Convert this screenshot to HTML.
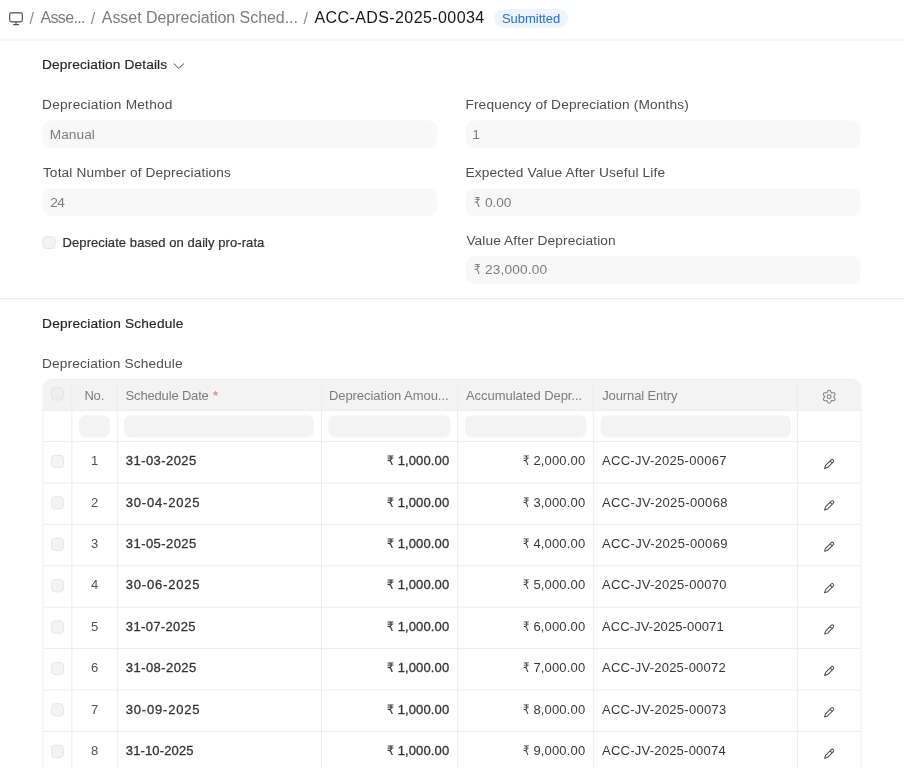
<!DOCTYPE html>
<html><head><meta charset="utf-8"><title>Asset Depreciation Schedule</title>
<style>
*{box-sizing:border-box;margin:0;padding:0}
html,body{width:904px;height:768px;overflow:hidden;background:#fff}
body{font-family:"Liberation Sans","DejaVu Sans",sans-serif;position:relative}
#root{position:absolute;left:0;top:0;width:904px;height:768px;overflow:hidden;will-change:transform}
.a,.t{position:absolute;white-space:nowrap}
.t{line-height:20px}
svg{position:absolute;overflow:visible}
</style></head><body>
<div id="root">
<svg style="left:0;top:0" width="904" height="768"><rect x="0" y="39.3" width="904" height="1.3" fill="#f0f0f0"/><rect x="0" y="298" width="904" height="1.3" fill="#ededed"/><rect x="494.1" y="8.9" width="74.2" height="18.9" rx="9.45" fill="#ecf4fc"/><rect x="42.6" y="120.4" width="394.7" height="27.5" rx="8" fill="#f8f8f8"/><rect x="465.9" y="120.4" width="394.7" height="27.5" rx="8" fill="#f8f8f8"/><rect x="42.6" y="188.4" width="394.7" height="27.5" rx="8" fill="#f8f8f8"/><rect x="465.9" y="188.4" width="394.7" height="27.5" rx="8" fill="#f8f8f8"/><rect x="465.9" y="256.3" width="394.7" height="27.5" rx="8" fill="#f8f8f8"/><rect x="42.9" y="236.5" width="12.3" height="12.1" rx="3.6" fill="#f3f3f3" stroke="#e6e6e6"/><path d="M43.1 800V388A8.5 8.5 0 0 1 51.6 379.5H852.4A8.5 8.5 0 0 1 860.9 388V800" fill="#fff" stroke="#ededed"/><path d="M43.6 410V388A8 8 0 0 1 51.6 380H852.4A8 8 0 0 1 860.4 388V410Z" fill="#f3f3f3"/><rect x="71.4" y="380" width="1" height="400" fill="#ededed"/><rect x="116.8" y="380" width="1" height="400" fill="#ededed"/><rect x="321" y="380" width="1" height="400" fill="#ededed"/><rect x="457.1" y="380" width="1" height="400" fill="#ededed"/><rect x="592.8" y="380" width="1" height="400" fill="#ededed"/><rect x="796.9" y="380" width="1" height="400" fill="#ededed"/><rect x="43.6" y="409.9" width="816.8" height="1" fill="#ededed"/><rect x="43.6" y="441.1" width="816.8" height="1" fill="#ededed"/><rect x="43.6" y="482.5" width="816.8" height="1" fill="#ededed"/><rect x="43.6" y="523.9" width="816.8" height="1" fill="#ededed"/><rect x="43.6" y="565.3" width="816.8" height="1" fill="#ededed"/><rect x="43.6" y="606.7" width="816.8" height="1" fill="#ededed"/><rect x="43.6" y="648.1" width="816.8" height="1" fill="#ededed"/><rect x="43.6" y="689.5" width="816.8" height="1" fill="#ededed"/><rect x="43.6" y="730.9" width="816.8" height="1" fill="#ededed"/><rect x="51.4" y="387.8" width="12.1" height="12.2" rx="3.6" fill="#eeeeee" stroke="#e4e4e4"/><rect x="79.1" y="415.2" width="30.8" height="22.3" rx="7" fill="#f3f3f3"/><rect x="124" y="415.2" width="190.1" height="22.3" rx="7" fill="#f3f3f3"/><rect x="328.3" y="415.2" width="122.1" height="22.3" rx="7" fill="#f3f3f3"/><rect x="465" y="415.2" width="121.5" height="22.3" rx="7" fill="#f3f3f3"/><rect x="600.6" y="415.2" width="190.2" height="22.3" rx="7" fill="#f3f3f3"/><rect x="51.6" y="455.3" width="11.9" height="12.4" rx="3.6" fill="#f3f3f3" stroke="#e6e6e6"/><rect x="51.6" y="496.7" width="11.9" height="12.4" rx="3.6" fill="#f3f3f3" stroke="#e6e6e6"/><rect x="51.6" y="538.1" width="11.9" height="12.4" rx="3.6" fill="#f3f3f3" stroke="#e6e6e6"/><rect x="51.6" y="579.5" width="11.9" height="12.4" rx="3.6" fill="#f3f3f3" stroke="#e6e6e6"/><rect x="51.6" y="620.9" width="11.9" height="12.4" rx="3.6" fill="#f3f3f3" stroke="#e6e6e6"/><rect x="51.6" y="662.3" width="11.9" height="12.4" rx="3.6" fill="#f3f3f3" stroke="#e6e6e6"/><rect x="51.6" y="703.7" width="11.9" height="12.4" rx="3.6" fill="#f3f3f3" stroke="#e6e6e6"/><rect x="51.6" y="745.1" width="11.9" height="12.4" rx="3.6" fill="#f3f3f3" stroke="#e6e6e6"/></svg>
<svg style="left:0;top:0" width="40" height="40" fill="none" stroke="#4f4f4f" stroke-width="1.15" stroke-linecap="round" stroke-linejoin="round"><rect x="9.7" y="12.85" width="12.6" height="8.95" rx="1.45"/><path d="M16 21.8v2.6M13.6 24.55h4.9"/></svg>
<svg style="left:0;top:0" width="200" height="80" fill="none" stroke="#404040" stroke-width="1" stroke-linecap="round" stroke-linejoin="round"><path d="M174.1 63.9L178.85 68.4L183.6 63.9"/></svg>
<svg style="left:0;top:0" width="904" height="768" fill="none" stroke="#858585" stroke-width="1.05" stroke-linejoin="round"><path d="M829.20 390.20 L829.62 390.27 L830.02 390.46 L830.38 390.77 L830.68 391.17 L830.92 391.63 L831.10 392.11 L831.24 392.57 L831.38 392.93 L831.76 392.87 L832.22 392.76 L832.73 392.68 L833.24 392.66 L833.74 392.72 L834.19 392.87 L834.56 393.12 L834.83 393.45 L834.98 393.85 L835.01 394.29 L834.92 394.76 L834.73 395.22 L834.45 395.66 L834.12 396.05 L833.80 396.40 L833.55 396.70 L833.80 397.00 L834.12 397.35 L834.45 397.74 L834.73 398.18 L834.92 398.64 L835.01 399.11 L834.98 399.55 L834.83 399.95 L834.56 400.28 L834.19 400.53 L833.74 400.68 L833.24 400.74 L832.73 400.72 L832.22 400.64 L831.76 400.53 L831.38 400.47 L831.24 400.83 L831.10 401.29 L830.92 401.77 L830.68 402.23 L830.38 402.63 L830.02 402.94 L829.62 403.13 L829.20 403.20 L828.78 403.13 L828.38 402.94 L828.02 402.63 L827.72 402.23 L827.48 401.77 L827.30 401.29 L827.16 400.83 L827.03 400.47 L826.64 400.53 L826.18 400.64 L825.67 400.72 L825.16 400.74 L824.66 400.68 L824.21 400.53 L823.84 400.28 L823.57 399.95 L823.42 399.55 L823.39 399.11 L823.48 398.64 L823.67 398.18 L823.95 397.74 L824.28 397.35 L824.60 397.00 L824.85 396.70 L824.60 396.40 L824.28 396.05 L823.95 395.66 L823.67 395.22 L823.48 394.76 L823.39 394.29 L823.42 393.85 L823.57 393.45 L823.84 393.12 L824.21 392.87 L824.66 392.72 L825.16 392.66 L825.67 392.68 L826.18 392.76 L826.64 392.87 L827.03 392.93 L827.16 392.57 L827.30 392.11 L827.48 391.63 L827.72 391.17 L828.02 390.77 L828.38 390.46 L828.78 390.27Z"/><circle cx="829.2" cy="396.7" r="1.95"/></svg>
<svg style="left:0;top:0" width="904" height="768" fill="none" stroke="#4a4a4a" stroke-width="1" stroke-linejoin="round" stroke-linecap="round"><g transform="translate(824.55 468.55) rotate(-45)"><path d="M0 0L2.9 -1.45H10.9A1.45 1.45 0 0 1 10.9 1.45H2.9ZM9.3 -1.45V1.45"/></g><g transform="translate(824.55 509.95) rotate(-45)"><path d="M0 0L2.9 -1.45H10.9A1.45 1.45 0 0 1 10.9 1.45H2.9ZM9.3 -1.45V1.45"/></g><g transform="translate(824.55 551.35) rotate(-45)"><path d="M0 0L2.9 -1.45H10.9A1.45 1.45 0 0 1 10.9 1.45H2.9ZM9.3 -1.45V1.45"/></g><g transform="translate(824.55 592.75) rotate(-45)"><path d="M0 0L2.9 -1.45H10.9A1.45 1.45 0 0 1 10.9 1.45H2.9ZM9.3 -1.45V1.45"/></g><g transform="translate(824.55 634.15) rotate(-45)"><path d="M0 0L2.9 -1.45H10.9A1.45 1.45 0 0 1 10.9 1.45H2.9ZM9.3 -1.45V1.45"/></g><g transform="translate(824.55 675.55) rotate(-45)"><path d="M0 0L2.9 -1.45H10.9A1.45 1.45 0 0 1 10.9 1.45H2.9ZM9.3 -1.45V1.45"/></g><g transform="translate(824.55 716.95) rotate(-45)"><path d="M0 0L2.9 -1.45H10.9A1.45 1.45 0 0 1 10.9 1.45H2.9ZM9.3 -1.45V1.45"/></g><g transform="translate(824.55 758.35) rotate(-45)"><path d="M0 0L2.9 -1.45H10.9A1.45 1.45 0 0 1 10.9 1.45H2.9ZM9.3 -1.45V1.45"/></g></svg>
<div class="t" style="left:29.60px;top:9px;font-size:16px;color:#8f8f8f;letter-spacing:0.000px">/</div>
<div class="t" style="left:40.40px;top:8px;font-size:16px;color:#7c7c7c;letter-spacing:-0.627px">Asse...</div>
<div class="t" style="left:90.80px;top:9px;font-size:16px;color:#8f8f8f;letter-spacing:0.000px">/</div>
<div class="t" style="left:101.80px;top:8px;font-size:16px;color:#7c7c7c;letter-spacing:-0.050px">Asset Depreciation Sched...</div>
<div class="t" style="left:303.60px;top:9px;font-size:16px;color:#8f8f8f;letter-spacing:0.000px">/</div>
<div class="t" style="left:314.40px;top:8px;font-size:16px;color:#171717;letter-spacing:0.415px">ACC-ADS-2025-00034</div>
<div class="t" style="left:501.90px;top:9px;font-size:13px;color:#2a6fc9;letter-spacing:-0.013px">Submitted</div>
<div class="t" style="left:42.10px;top:55px;font-size:13.7px;color:#262626;letter-spacing:0.135px;-webkit-text-stroke:0.18px #262626">Depreciation Details</div>
<div class="t" style="left:42.10px;top:314px;font-size:13.7px;color:#262626;letter-spacing:0.174px;-webkit-text-stroke:0.18px #262626">Depreciation Schedule</div>
<div class="t" style="left:42.10px;top:95px;font-size:13.7px;color:#4d4d4d;letter-spacing:0.223px">Depreciation Method</div>
<div class="t" style="left:465.40px;top:95px;font-size:13.7px;color:#4d4d4d;letter-spacing:0.155px">Frequency of Depreciation (Months)</div>
<div class="t" style="left:42.90px;top:163px;font-size:13.7px;color:#4d4d4d;letter-spacing:0.141px">Total Number of Depreciations</div>
<div class="t" style="left:465.40px;top:163px;font-size:13.7px;color:#4d4d4d;letter-spacing:0.141px">Expected Value After Useful Life</div>
<div class="t" style="left:466.40px;top:231px;font-size:13.7px;color:#4d4d4d;letter-spacing:0.116px">Value After Depreciation</div>
<div class="t" style="left:42.10px;top:354px;font-size:13.7px;color:#4d4d4d;letter-spacing:0.139px">Depreciation Schedule</div>
<div class="t" style="left:49.70px;top:125px;font-size:13.7px;color:#7c7c7c;letter-spacing:0.050px">Manual</div>
<div class="t" style="left:472.30px;top:125px;font-size:13.7px;color:#7c7c7c;letter-spacing:0.000px">1</div>
<div class="t" style="left:50.30px;top:193px;font-size:13.7px;color:#7c7c7c;letter-spacing:-0.712px">24</div>
<div class="t" style="left:473.60px;top:193px;font-size:13.7px;color:#7c7c7c;transform-origin:0 0;transform:scaleX(0.756)">₹</div>
<div class="t" style="left:485.00px;top:193px;font-size:13.7px;color:#7c7c7c;letter-spacing:-0.109px">0.00</div>
<div class="t" style="left:473.60px;top:260px;font-size:13.7px;color:#7c7c7c;transform-origin:0 0;transform:scaleX(0.756)">₹</div>
<div class="t" style="left:485.00px;top:260px;font-size:13.7px;color:#7c7c7c;letter-spacing:0.165px">23,000.00</div>
<div class="t" style="left:62.60px;top:233px;font-size:13px;color:#2e2e2e;letter-spacing:0.069px;-webkit-text-stroke:0.2px #2e2e2e">Depreciate based on daily pro-rata</div>
<div class="t" style="left:84.40px;top:386px;font-size:13px;color:#7c7c7c;letter-spacing:-0.159px">No.</div>
<div class="t" style="left:125.60px;top:386px;font-size:13px;color:#7c7c7c;letter-spacing:-0.171px">Schedule Date</div>
<div class="t" style="left:212.90px;top:386px;font-size:13px;color:#e4888b;letter-spacing:0.000px;-webkit-text-stroke:0.25px #e4888b">*</div>
<div class="t" style="left:328.90px;top:386px;font-size:13px;color:#7c7c7c;letter-spacing:-0.052px">Depreciation Amou...</div>
<div class="t" style="left:466.00px;top:386px;font-size:13px;color:#7c7c7c;letter-spacing:-0.053px">Accumulated Depr...</div>
<div class="t" style="left:602.20px;top:386px;font-size:13px;color:#7c7c7c;letter-spacing:-0.116px">Journal Entry</div>
<div class="t" style="left:91.10px;top:451px;font-size:13px;color:#525252;letter-spacing:0.000px">1</div>
<div class="t" style="left:125.80px;top:451px;font-size:13px;color:#333;letter-spacing:0.437px;-webkit-text-stroke:0.3px #333">31-03-2025</div>
<div class="t" style="left:387.30px;top:451px;font-size:13px;color:#333;transform-origin:0 0;transform:scaleX(0.837);-webkit-text-stroke:0.18px #333">₹</div>
<div class="t" style="left:397.70px;top:451px;font-size:13px;color:#333;letter-spacing:0.118px;-webkit-text-stroke:0.3px #333">1,000.00</div>
<div class="t" style="left:523.10px;top:451px;font-size:13px;color:#383838;transform-origin:0 0;transform:scaleX(0.775)">₹</div>
<div class="t" style="left:533.40px;top:451px;font-size:13px;color:#383838;letter-spacing:0.161px">2,000.00</div>
<div class="t" style="left:602.00px;top:451px;font-size:13px;color:#383838;letter-spacing:0.286px">ACC-JV-2025-00067</div>
<div class="t" style="left:91.10px;top:493px;font-size:13px;color:#525252;letter-spacing:0.000px">2</div>
<div class="t" style="left:125.80px;top:493px;font-size:13px;color:#333;letter-spacing:0.804px;-webkit-text-stroke:0.3px #333">30-04-2025</div>
<div class="t" style="left:387.30px;top:493px;font-size:13px;color:#333;transform-origin:0 0;transform:scaleX(0.837);-webkit-text-stroke:0.18px #333">₹</div>
<div class="t" style="left:397.70px;top:493px;font-size:13px;color:#333;letter-spacing:0.118px;-webkit-text-stroke:0.3px #333">1,000.00</div>
<div class="t" style="left:523.10px;top:493px;font-size:13px;color:#383838;transform-origin:0 0;transform:scaleX(0.775)">₹</div>
<div class="t" style="left:533.40px;top:493px;font-size:13px;color:#383838;letter-spacing:0.161px">3,000.00</div>
<div class="t" style="left:602.00px;top:493px;font-size:13px;color:#383838;letter-spacing:0.342px">ACC-JV-2025-00068</div>
<div class="t" style="left:91.10px;top:534px;font-size:13px;color:#525252;letter-spacing:0.000px">3</div>
<div class="t" style="left:125.80px;top:534px;font-size:13px;color:#333;letter-spacing:0.437px;-webkit-text-stroke:0.3px #333">31-05-2025</div>
<div class="t" style="left:387.30px;top:534px;font-size:13px;color:#333;transform-origin:0 0;transform:scaleX(0.837);-webkit-text-stroke:0.18px #333">₹</div>
<div class="t" style="left:397.70px;top:534px;font-size:13px;color:#333;letter-spacing:0.118px;-webkit-text-stroke:0.3px #333">1,000.00</div>
<div class="t" style="left:523.10px;top:534px;font-size:13px;color:#383838;transform-origin:0 0;transform:scaleX(0.775)">₹</div>
<div class="t" style="left:533.40px;top:534px;font-size:13px;color:#383838;letter-spacing:0.161px">4,000.00</div>
<div class="t" style="left:602.00px;top:534px;font-size:13px;color:#383838;letter-spacing:0.342px">ACC-JV-2025-00069</div>
<div class="t" style="left:91.10px;top:575px;font-size:13px;color:#525252;letter-spacing:0.000px">4</div>
<div class="t" style="left:125.80px;top:575px;font-size:13px;color:#333;letter-spacing:0.804px;-webkit-text-stroke:0.3px #333">30-06-2025</div>
<div class="t" style="left:387.30px;top:575px;font-size:13px;color:#333;transform-origin:0 0;transform:scaleX(0.837);-webkit-text-stroke:0.18px #333">₹</div>
<div class="t" style="left:397.70px;top:575px;font-size:13px;color:#333;letter-spacing:0.118px;-webkit-text-stroke:0.3px #333">1,000.00</div>
<div class="t" style="left:523.10px;top:575px;font-size:13px;color:#383838;transform-origin:0 0;transform:scaleX(0.775)">₹</div>
<div class="t" style="left:533.40px;top:575px;font-size:13px;color:#383838;letter-spacing:0.161px">5,000.00</div>
<div class="t" style="left:602.00px;top:575px;font-size:13px;color:#383838;letter-spacing:0.286px">ACC-JV-2025-00070</div>
<div class="t" style="left:91.10px;top:617px;font-size:13px;color:#525252;letter-spacing:0.000px">5</div>
<div class="t" style="left:125.80px;top:617px;font-size:13px;color:#333;letter-spacing:0.359px;-webkit-text-stroke:0.3px #333">31-07-2025</div>
<div class="t" style="left:387.30px;top:617px;font-size:13px;color:#333;transform-origin:0 0;transform:scaleX(0.837);-webkit-text-stroke:0.18px #333">₹</div>
<div class="t" style="left:397.70px;top:617px;font-size:13px;color:#333;letter-spacing:0.118px;-webkit-text-stroke:0.3px #333">1,000.00</div>
<div class="t" style="left:523.10px;top:617px;font-size:13px;color:#383838;transform-origin:0 0;transform:scaleX(0.775)">₹</div>
<div class="t" style="left:533.40px;top:617px;font-size:13px;color:#383838;letter-spacing:0.161px">6,000.00</div>
<div class="t" style="left:602.00px;top:617px;font-size:13px;color:#383838;letter-spacing:0.104px">ACC-JV-2025-00071</div>
<div class="t" style="left:91.10px;top:658px;font-size:13px;color:#525252;letter-spacing:0.000px">6</div>
<div class="t" style="left:125.80px;top:658px;font-size:13px;color:#333;letter-spacing:0.437px;-webkit-text-stroke:0.3px #333">31-08-2025</div>
<div class="t" style="left:387.30px;top:658px;font-size:13px;color:#333;transform-origin:0 0;transform:scaleX(0.837);-webkit-text-stroke:0.18px #333">₹</div>
<div class="t" style="left:397.70px;top:658px;font-size:13px;color:#333;letter-spacing:0.118px;-webkit-text-stroke:0.3px #333">1,000.00</div>
<div class="t" style="left:523.10px;top:658px;font-size:13px;color:#383838;transform-origin:0 0;transform:scaleX(0.775)">₹</div>
<div class="t" style="left:533.40px;top:658px;font-size:13px;color:#383838;letter-spacing:0.161px">7,000.00</div>
<div class="t" style="left:602.00px;top:658px;font-size:13px;color:#383838;letter-spacing:0.236px">ACC-JV-2025-00072</div>
<div class="t" style="left:91.10px;top:700px;font-size:13px;color:#525252;letter-spacing:0.000px">7</div>
<div class="t" style="left:125.80px;top:700px;font-size:13px;color:#333;letter-spacing:0.804px;-webkit-text-stroke:0.3px #333">30-09-2025</div>
<div class="t" style="left:387.30px;top:700px;font-size:13px;color:#333;transform-origin:0 0;transform:scaleX(0.837);-webkit-text-stroke:0.18px #333">₹</div>
<div class="t" style="left:397.70px;top:700px;font-size:13px;color:#333;letter-spacing:0.118px;-webkit-text-stroke:0.3px #333">1,000.00</div>
<div class="t" style="left:523.10px;top:700px;font-size:13px;color:#383838;transform-origin:0 0;transform:scaleX(0.775)">₹</div>
<div class="t" style="left:533.40px;top:700px;font-size:13px;color:#383838;letter-spacing:0.161px">8,000.00</div>
<div class="t" style="left:602.00px;top:700px;font-size:13px;color:#383838;letter-spacing:0.261px">ACC-JV-2025-00073</div>
<div class="t" style="left:91.10px;top:741px;font-size:13px;color:#525252;letter-spacing:0.000px">8</div>
<div class="t" style="left:125.80px;top:741px;font-size:13px;color:#333;letter-spacing:0.137px;-webkit-text-stroke:0.3px #333">31-10-2025</div>
<div class="t" style="left:387.30px;top:741px;font-size:13px;color:#333;transform-origin:0 0;transform:scaleX(0.837);-webkit-text-stroke:0.18px #333">₹</div>
<div class="t" style="left:397.70px;top:741px;font-size:13px;color:#333;letter-spacing:0.118px;-webkit-text-stroke:0.3px #333">1,000.00</div>
<div class="t" style="left:523.10px;top:741px;font-size:13px;color:#383838;transform-origin:0 0;transform:scaleX(0.775)">₹</div>
<div class="t" style="left:533.40px;top:741px;font-size:13px;color:#383838;letter-spacing:0.161px">9,000.00</div>
<div class="t" style="left:602.00px;top:741px;font-size:13px;color:#383838;letter-spacing:0.236px">ACC-JV-2025-00074</div>
</div>
</body></html>
